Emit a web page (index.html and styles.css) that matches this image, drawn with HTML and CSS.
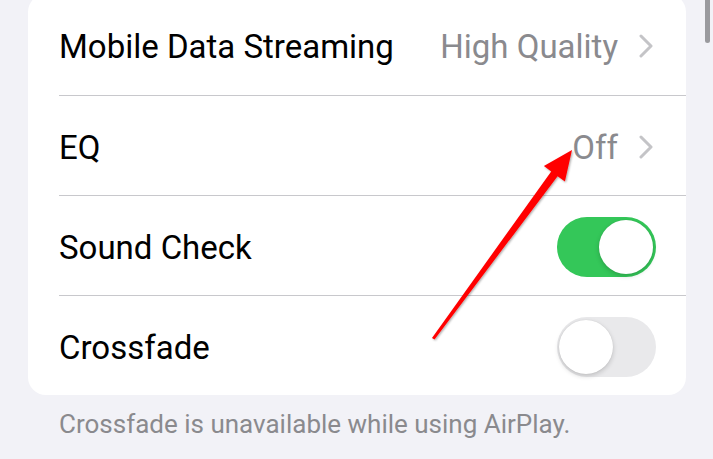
FILE: index.html
```html
<!DOCTYPE html>
<html>
<head>
<meta charset="utf-8">
<link rel="stylesheet" href="styles.css">
</head>
<body>
<div class="page">
  <div class="card">
    <div class="row first">
      <span class="label">Mobile Data Streaming</span>
      <span class="value">High Quality</span>
      <svg class="chev" width="14" height="24" viewBox="0 0 14 24"><path d="M2 2 L12 12 L2 22" fill="none" stroke="#c4c4c7" stroke-width="3" stroke-linecap="round" stroke-linejoin="round"/></svg>
    </div>
    <div class="row">
      <span class="label">EQ</span>
      <span class="value">Off</span>
      <svg class="chev" width="14" height="24" viewBox="0 0 14 24"><path d="M2 2 L12 12 L2 22" fill="none" stroke="#c4c4c7" stroke-width="3" stroke-linecap="round" stroke-linejoin="round"/></svg>
    </div>
    <div class="row toggle-row">
      <span class="label">Sound Check</span>
      <span class="switch on"><span class="knob"></span></span>
    </div>
    <div class="row toggle-row last">
      <span class="label">Crossfade</span>
      <span class="switch off"><span class="knob"></span></span>
    </div>
  </div>
  <p class="footer">Crossfade is unavailable while using AirPlay.</p>
</div>
<div class="scrollbar"></div>
<svg class="arrow" width="713" height="459" viewBox="0 0 713 459">
  <defs>
    <filter id="sh" x="-20%" y="-20%" width="140%" height="140%">
      <feDropShadow dx="1" dy="1" stdDeviation="1" flood-color="#000" flood-opacity="0.35"/>
    </filter>
  </defs>
  <polygon filter="url(#sh)" fill="#ff0000" points="432,338 551.2,171.4 543.9,166.1 572,150 564.9,181.5 557.6,176.2 434.5,339.5"/>
</svg>
</body>
</html>
```
FILE: styles.css
```css
html, body {
  margin: 0;
  padding: 0;
  background: #f2f2f7;
  width: 713px;
  height: 459px;
  overflow: hidden;
  font-family: "Roboto", "Inter", "Liberation Sans", sans-serif;
}
.page {
  padding-left: 28px;
  width: 658px;
}
.card {
  margin-top: -6px;
  background: #fff;
  border-radius: 18px;
  overflow: hidden;
}
.row {
  display: flex;
  align-items: center;
  margin-left: 31px;
  padding-right: 33px;
  border-bottom: 1px solid #c8c8cc;
  box-sizing: border-box;
  height: 100px;
}
.row.first {
  height: 102px;
}
.row.last {
  border-bottom: none;
  height: 99px;
}
.row.toggle-row {
  padding-right: 30px;
}
.label {
  flex: 1;
  font-size: 33px;
  color: #000;
  padding-top: 3px;
}
.value {
  font-size: 33px;
  color: #8a8a8e;
  margin-right: 21px;
  padding-top: 3px;
}
.chev {
  display: block;
  margin-top: 3px;
}
.switch {
  position: relative;
  width: 99px;
  height: 60px;
  border-radius: 30px;
  display: block;
  margin-top: 2px;
}
.switch.on {
  background: #34c759;
}
.switch.off {
  background: #e9e9eb;
}
.knob {
  position: absolute;
  top: 3px;
  width: 54px;
  height: 54px;
  border-radius: 50%;
  background: #fff;
  box-shadow: 0 2px 5px rgba(0,0,0,0.18), 0 0 1px rgba(0,0,0,0.12);
}
.switch.on .knob {
  right: 3px;
}
.switch.off .knob {
  left: 2px;
}
.footer {
  margin: 14px 0 0 31px;
  font-size: 26px;
  color: #8a8a8e;
}
.scrollbar {
  position: absolute;
  left: 705px;
  top: -6px;
  width: 5px;
  height: 49px;
  border-radius: 3px;
  background: #9a9a9e;
}
.arrow {
  position: absolute;
  left: 0;
  top: 0;
  pointer-events: none;
}
```
